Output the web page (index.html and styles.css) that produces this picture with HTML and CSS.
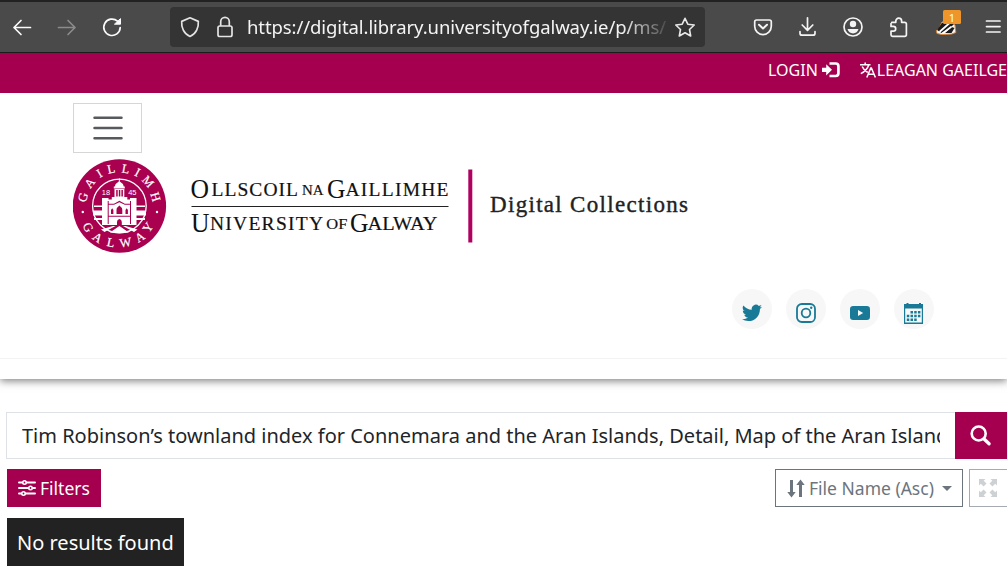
FILE: index.html
```html
<!DOCTYPE html>
<html lang="en">
<head>
<meta charset="utf-8">
<title>Digital Collections</title>
<link rel="stylesheet" href="styles.css">
</head>
<body>
<div class="browser">
  <svg class="nav-icons" width="170" height="50" viewBox="0 2 170 50" fill="none" stroke="#fbfbfe" stroke-width="1.7" stroke-linecap="round" stroke-linejoin="round">
    <path d="M30.500 27.500H14M21 20.500l-7 7 7 7"/>
    <path stroke="#8b8b8b" d="M58.500 27.500H75M68 20.500l7 7-7 7"/>
    <path d="M117.500 21.200a8.200 8.200 0 1 0 2.700 6.300"/>
    <path fill="#fbfbfe" stroke-width="1" d="M120.500 19v5.200h-5.700z"/>
  </svg>
  <div class="urlbar">
    <svg width="77" height="40" viewBox="170 7 77 40" fill="none" stroke="#e4e4e4" stroke-width="1.700" stroke-linejoin="round">
      <path d="M190 17.800l8.300 3.600c.5 6-2 12.500-8.300 15.100-6.300-2.600-8.800-9.100-8.300-15.100z"/>
      <rect x="218" y="26" width="14" height="10.500" rx="1.800"/><path d="M220.700 26v-4.300a4.300 4.300 0 0 1 8.600 0V26"/>
    </svg>
    <div class="url">https://digital.library.universityofgalway.ie/p/ms/</div>
    <svg width="38" height="40" viewBox="667 7 38 40" fill="none" stroke="#e8e8e8" stroke-width="1.600" stroke-linejoin="round"><path d="M685 18.300l2.800 5.900 6.400.8-4.700 4.500 1.200 6.500-5.700-3.200-5.700 3.200 1.200-6.500-4.700-4.500 6.400-.8z"/></svg>
  </div>
  <svg class="tools" width="302" height="50" viewBox="705 2 302 50" fill="none" stroke="#f4f4f6" stroke-width="1.700" stroke-linecap="round" stroke-linejoin="round">
    <path d="M756.500 20h13a1.800 1.800 0 0 1 1.800 1.800v4.500a8.300 8.300 0 0 1-16.600 0v-4.500a1.800 1.800 0 0 1 1.800-1.800z"/><path stroke-width="2" d="M759 24.800l4 3.700 4-3.700"/>
    <path d="M807.500 17.800v12M802.200 25l5.300 5.300 5.300-5.300M800 31.500v1.700a2 2 0 0 0 2 2h11a2 2 0 0 0 2-2v-1.700"/>
    <circle cx="853" cy="27" r="9"/><circle cx="853" cy="24" r="3.200" fill="#f4f4f6" stroke="none"/><path fill="#f4f4f6" stroke="none" d="M847.500 29h11c-.6 2.700-2.800 4.400-5.500 4.400s-4.900-1.700-5.500-4.400z"/>
    <path d="M891.800 22.300h4v-1.200a2.900 2.900 0 0 1 5.800 0v1.200h3.200a1.600 1.600 0 0 1 1.600 1.600v10.800a1.600 1.600 0 0 1-1.600 1.600h-12.200a1.600 1.600 0 0 1-1.600-1.600v-3.500h2.300a2.400 2.400 0 0 0 0-4.800H891v-2.900"/>
    <g stroke-width="1"><path stroke="#d98941" fill="#faf7f0" d="M936.500 30.500l3-3 2.500-5.500 9.500-1.500 3.500 5 .8 7-4 1.500-10 .5-4.500-1z"/>
    <path fill="#1b1b1b" stroke="none" d="M937 30l5-7 8.500-3 3.500 4-4 4-8.500 5zM945 33l6.500-6 3 1-3 5z"/><path stroke="#fff" stroke-width="1.700" d="M940 31.500l9-8M943 33l8-6"/></g>
    <path d="M986.500 21H1000M986.500 26.600H1000M986.500 32H1000"/>
    <rect x="943" y="10" width="18" height="14" rx="1.500" fill="#ee962a" stroke="none"/><text class="badge-text" x="952" y="21.500">1</text>
  </svg>
</div>
<nav class="topbar">
  <a class="login">LOGIN</a>
  <svg class="login-icon" width="18" height="16" viewBox="0 0 18 16"><path fill="#fff" d="M0 5.700h4.200V2.200L10 7.800 4.200 13.400V9.900H0z"/><path fill="none" stroke="#fff" stroke-width="2.700" d="M7.500 1.500h6.200q2.700 0 2.700 2.700v7.100q0 2.700-2.700 2.700H7.500"/></svg>
  <svg class="lang-icon" width="16" height="16" viewBox="0 0 16 16" fill="none" stroke="#fff" stroke-width="1.500"><path d="M0 2.700h10.500M5.200.5v2.200M8.700 3C7.500 7 4.500 9.800.8 11.600M2.200 4.500c1 2.600 3.200 4.600 5.500 6M6.800 15.500l4-9.500h.6l4 9.500M8.300 12.300h5.600"/></svg>
  <a class="lang">LEAGAN GAEILGE</a>
</nav>
<header class="header">
  <button class="burger"><svg width="30" height="24" viewBox="0 0 30 24" stroke="#575a5c" stroke-width="2.500" stroke-linecap="round"><path d="M1.500 1.700h27M1.500 12h27M1.500 22.200h27"/></svg></button>
  <svg class="logo" width="620" height="96" viewBox="73 158 620 96">
    <circle cx="119.400" cy="206" r="46.700" fill="#a90050"/>
    <circle cx="119.400" cy="206" r="26.800" fill="none" stroke="#fff" stroke-width="1.300"/>
    <g class="seal-text">
      <text transform="translate(87 198.500) rotate(-75)">G</text><text transform="translate(93 185.500) rotate(-52)">A</text><text transform="translate(101.500 177) rotate(-31)">I</text><text transform="translate(112 173) rotate(-12)">L</text><text transform="translate(125 173) rotate(10)">L</text><text transform="translate(135.500 176) rotate(28)">I</text><text transform="translate(145 184.500) rotate(48)">M</text><text transform="translate(151.500 198) rotate(73)">H</text>
      <text transform="translate(87 228) rotate(60)"><tspan dy="3">G</tspan></text><text transform="translate(97 238.500) rotate(34)"><tspan dy="3">A</tspan></text><text transform="translate(110.500 243.500) rotate(12)"><tspan dy="3">L</tspan></text><text transform="translate(125.500 243.500) rotate(-9)"><tspan dy="3">W</tspan></text><text transform="translate(140.500 238) rotate(-32)"><tspan dy="3">A</tspan></text><text transform="translate(149 228) rotate(-55)"><tspan dy="3">Y</tspan></text>
    </g>
    <circle cx="82.800" cy="212" r="1.200" fill="#fff"/><circle cx="157" cy="212" r="1.200" fill="#fff"/>
    <text class="year" x="106" y="194.500">18</text><text class="year" x="132.300" y="194.500">45</text>
    <g fill="#fff">
      <path d="M119 178.500h.8v3q3 1.500 4 5h1v2h-11v-2h1q1-3.500 4-5zM114.500 189h9.800v8h3v3h-15.500v-3h2.700z"/>
      <path d="M102 198h6.500v1.500h4v-2.500h13.500v2.500h4V198h6.500v27h-34.500z"/>
      <path d="M94 205.500h9v1.500h-9zM93 210.500h10v5H93zM94 218h9v2h-9zM136 205.500h9v1.500h-9zM136 210.500h10v5h-10zM136 218h9v2h-9z"/>
      <path d="M113 226l-12 3.500 3.500 2.500 11-6zM125.500 226l12 3.500-3.500 2.500-11-6zM119.400 226l-9.500 6.500q9.500 1.500 19 0z"/>
    </g>
    <g fill="#a90050"><path d="M116.200 190h1.500v6.500h-1.500zM118.800 190h1.500v6.500h-1.500zM121.400 190h1.500v6.500h-1.500zM107.700 201h1v23h-1zM130 201h1v23h-1zM116.500 214v-4q0-2.500 2.900-4.500 2.900 2 2.900 4.500v4zM117 225v-3q0-2.500 2.400-3 2.400.5 2.400 3v3zM111 214v-4l1.200-1.800 1.200 1.800v4zM125.500 214v-4l1.200-1.800 1.200 1.800v4zM108 203.800h6l5.400-3 5.400 3h6v1h-6l-5.400-2.500-5.400 2.500h-6zM108 215.800h23v1h-23z"/></g>
    <g class="wordmark">
      <text class="initial" x="190.500" y="197.800" textLength="18.500" lengthAdjust="spacingAndGlyphs">O</text><text class="small" x="211.500" y="196" textLength="86.500">LLSCOIL</text><text class="tiny" x="302" y="194.700" textLength="21.500" lengthAdjust="spacingAndGlyphs">NA</text><text class="initial" x="327" y="197.800" textLength="18.500" lengthAdjust="spacingAndGlyphs">G</text><text class="small" x="345.500" y="196" textLength="103">AILLIMHE</text>
      <text class="initial" x="191" y="232.300" textLength="18.500" lengthAdjust="spacingAndGlyphs">U</text><text class="small" x="210" y="230" textLength="113">NIVERSITY</text><text class="tiny" x="326.300" y="229" textLength="21" lengthAdjust="spacingAndGlyphs">OF</text><text class="initial" x="350" y="232.300" textLength="18.500" lengthAdjust="spacingAndGlyphs">G</text><text class="small" x="367.500" y="230" textLength="70" lengthAdjust="spacingAndGlyphs">ALWAY</text>
    </g>
    <path fill="#222" d="M191.500 206h257v1h-257z"/>
    <path fill="#b00060" d="M468.300 169.500h4v73h-4z"/>
    <text class="collections" x="490" y="212.300" textLength="198">Digital Collections</text>
  </svg>
  <div class="social">
    <a><svg width="20" height="18" viewBox="0 0 24 20"><path fill="#187a96" d="M24 2.400a10 10 0 0 1-2.800.8A5 5 0 0 0 23.300.5a10 10 0 0 1-3.100 1.200 4.900 4.900 0 0 0-8.400 4.500A14 14 0 0 1 1.700 1a4.900 4.900 0 0 0 1.500 6.600A5 5 0 0 1 1 7v.1a4.900 4.900 0 0 0 3.900 4.800 5 5 0 0 1-2.200.1 4.900 4.900 0 0 0 4.600 3.400A10 10 0 0 1 0 17.500 14 14 0 0 0 7.500 19.700c9.100 0 14.300-7.700 14-14.600A10 10 0 0 0 24 2.400z"/></svg></a>
    <a><svg width="20" height="20" viewBox="0 0 20 20" fill="none" stroke="#187a96" stroke-width="1.800"><rect x="1" y="1" width="18" height="18" rx="4.800"/><circle cx="10" cy="10" r="4.300"/><circle cx="15.200" cy="4.800" r="1.200" fill="#187a96" stroke="none"/></svg></a>
    <a><svg width="20" height="14" viewBox="0 0 20 14"><rect width="20" height="14" rx="3.200" fill="#187a96"/><path fill="#f7f7f7" d="M8 4l5.200 3L8 10z"/></svg></a>
    <a><svg width="20" height="21" viewBox="0 0 20 21"><path fill="#187a96" d="M0 1h2.500V0h2v1h10.500V0h2v1H19v20H0zM1.200 5.500v14h16.600v-14z" fill-rule="evenodd"/><path stroke="#187a96" stroke-width="2.500" stroke-dasharray="2.500 1.200" fill="none" d="M6.500 9.300h10M2.800 13h13.700M2.800 16.700h9.900"/></svg></a>
  </div>
  <div class="rule"></div>
</header>
<main class="main">
  <div class="search">
    <div class="field"><div class="field-text">Tim Robinson’s townland index for Connemara and the Aran Islands, Detail, Map of the Aran Islands</div></div>
    <button class="search-btn"><svg width="22" height="22" viewBox="0 0 22 22" fill="none" stroke="#fff" stroke-width="2.600"><circle cx="8.700" cy="8.500" r="7"/><path stroke-width="3.300" stroke-linecap="round" d="M14.300 14.200l4.800 4.600"/></svg></button>
  </div>
  <div class="controls">
    <button class="filters"><svg width="18" height="16" viewBox="0 0 18 16" fill="none" stroke="#fff" stroke-width="2"><path stroke-linecap="round" d="M1 2.500h16M1 8h16M1 13.500h16"/><g fill="#a5004f" stroke-width="1.600"><circle cx="6.500" cy="2.500" r="1.700"/><circle cx="12.500" cy="8" r="1.700"/><circle cx="5.500" cy="13.500" r="1.700"/></g></svg><span>Filters</span></button>
    <div class="right">
      <button class="sort"><svg width="18" height="19" viewBox="0 0 18 19" fill="none" stroke="#6c757d"><path stroke-width="3" d="M4.500 1v13M13.500 18V5"/><path fill="#6c757d" stroke="none" d="M.3 13h8.400l-4.200 5.500zM9.300 6h8.400L13.500.500z"/></svg><span>File Name (Asc)</span><i class="caret"></i></button>
      <button class="expand"><svg width="18" height="18" viewBox="0 0 18 18"><g fill="#ced1d4"><path d="M0 0h6.500L4.700 1.800 7.500 4.600 4.600 7.500 1.800 4.700 0 6.500z"/><path d="M18 0v6.500l-1.800-1.800-2.800 2.800-2.900-2.900 2.800-2.800L11.500 0z"/><path d="M18 18h-6.500l1.800-1.800-2.800-2.800 2.900-2.900 2.800 2.800 1.800-1.800z"/><path d="M0 18v-6.500l1.800 1.800 2.800-2.800 2.900 2.900-2.800 2.800L6.500 18z"/></g></svg></button>
    </div>
  </div>
  <div class="empty">No results found</div>
</main>
</body>
</html>
```
FILE: styles.css
```css
* { box-sizing: border-box; }
body { margin: 0; width: 1007px; height: 582px; overflow: hidden; background: #fff; color: #212529; font-family: "Noto Sans", sans-serif; }
svg { display: block; flex: none; }
button { font: inherit; margin: 0; padding: 0; border-radius: 0; }
.browser { display: flex; align-items: center; height: 53px; background: #4a4a4a; border-top: 2px solid #222; border-bottom: 1px solid #1c1c1c; }
.urlbar { display: flex; align-items: center; width: 535px; height: 40px; border-radius: 4px; background: #343434; }
.url { width: 420px; overflow: hidden; white-space: nowrap; color: #f4f4f4; font-size: 18.5px; line-height: 40px; letter-spacing: -0.09px; -webkit-mask-image: linear-gradient(to right, #000 375px, transparent 425px); mask-image: linear-gradient(to right, #000 375px, transparent 425px); }
.badge-text { fill: #fff; stroke: none; font-size: 11px; text-anchor: middle; }
.topbar { display: flex; height: 40px; padding-left: 768px; background: #a5004f; color: #fff; font-size: 16px; line-height: 34px; white-space: nowrap; overflow: hidden; }
.login { width: 54px; }
.login-icon { margin-top: 9px; }
.lang-icon { margin: 9px 1px 0 20px; }
.header { height: 286px; padding-top: 10px; background: #fff; box-shadow: 0 2px 8px rgba(0, 0, 0, .5); clip-path: inset(0 0 -20px 0); }
.burger { display: flex; align-items: center; justify-content: center; width: 69px; height: 50px; margin-left: 73px; background: #fff; border: 1px solid #d6d6d6; }
.logo { margin: 5px 0 0 73px; }
.seal-text { fill: #fff; stroke: #fff; stroke-width: .2px; font: 12.5px "Liberation Serif", serif; text-anchor: middle; }
.year { fill: #fff; font: 7.5px "Liberation Sans", sans-serif; text-anchor: middle; }
.wordmark { fill: #111; font-family: "Liberation Serif", serif; }
.initial { font-size: 27px; }
.small { font-size: 19.5px; stroke: #111; stroke-width: .2px; }
.tiny { font-size: 15px; stroke: #111; stroke-width: .2px; }
.collections { fill: #222; stroke: #222; stroke-width: .4px; font: 23px "Liberation Serif", serif; }
.social { display: flex; gap: 14px; margin: 35px 0 0 732px; }
.social a { display: flex; align-items: center; justify-content: center; width: 40px; height: 40px; padding-top: 8px; border-radius: 50%; background: #f7f7f7; }
.rule { margin-top: 29px; border-top: 1px solid #f3f3f3; }
.main { padding: 33px 0 0 6px; }
.search { display: flex; height: 47px; }
.field { width: 949px; padding: 0 15px; border: 1px solid #dee2e6; border-right: 0; }
.field-text { overflow: hidden; white-space: nowrap; font-size: 20px; line-height: 46px; }
.search-btn { display: flex; align-items: center; justify-content: center; width: 52px; border: 0; background: #a5004f; }
.controls { display: flex; justify-content: space-between; height: 38px; margin: 10px 0 0 1px; font-size: 17.5px; }
.filters { display: flex; align-items: center; gap: 4px; width: 94px; padding-left: 11px; border: 0; background: #a5004f; color: #fff; }
.right { display: flex; gap: 6px; }
.sort { display: flex; align-items: center; gap: 4px; width: 188px; padding-left: 11px; border: 1px solid #6c757d; background: #fff; color: #6c757d; white-space: nowrap; }
.caret { margin-left: 4px; border: 5px solid transparent; border-top-color: #6c757d; border-bottom: 0; }
.expand { display: flex; align-items: center; width: 38px; padding-left: 9px; border: 1px solid #a6abb1; border-right: 0; background: #fff; }
.empty { width: 177px; height: 48px; margin: 11px 0 0 1px; padding-left: 10px; background: #222; color: #fff; font-size: 20px; line-height: 49px; white-space: nowrap; }
```
